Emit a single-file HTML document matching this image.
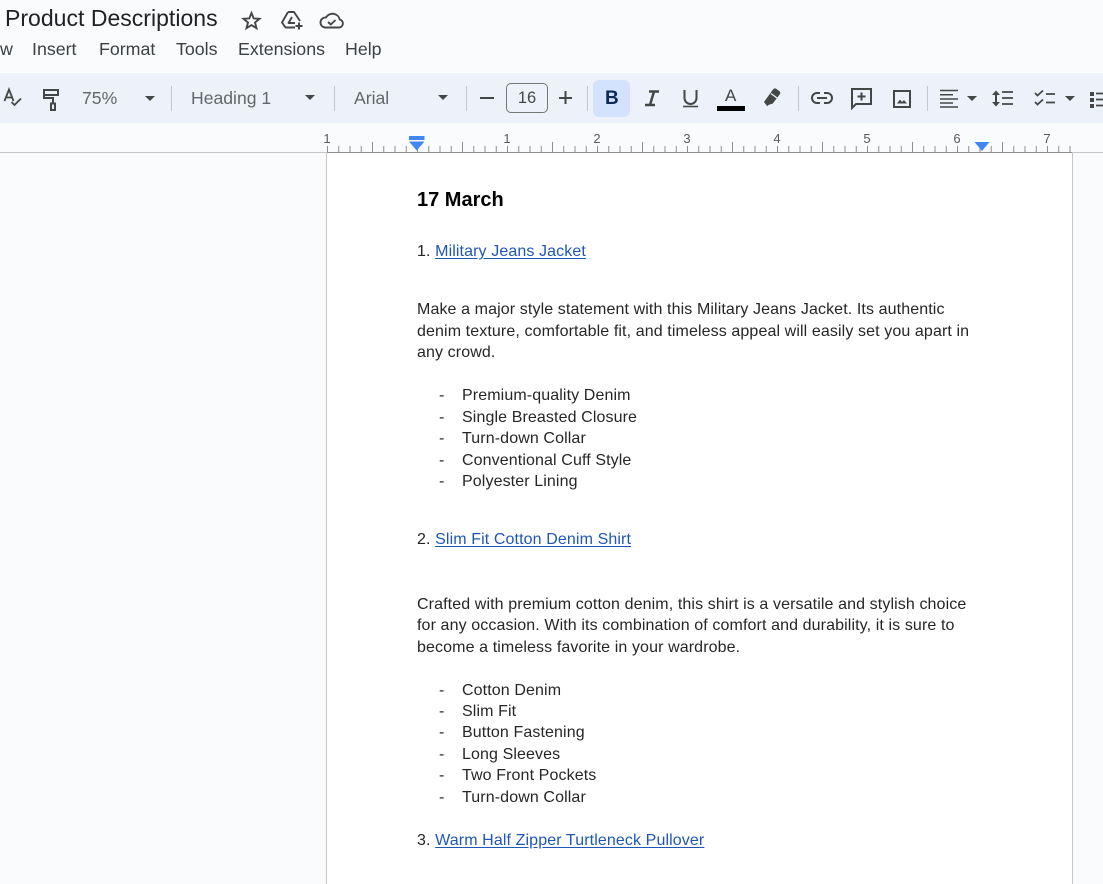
<!DOCTYPE html>
<html><head><meta charset="utf-8"><style>
html,body{margin:0;padding:0;width:1103px;height:884px;overflow:hidden;background:#f9fbfd;font-family:"Liberation Sans",sans-serif}
.a{position:absolute;white-space:nowrap}
.t{position:absolute;white-space:nowrap;font-size:16px;letter-spacing:.11px;line-height:22px;color:#262626;left:417px}
.b{left:462px}
.d{left:439px}
.l{color:#1f57b5;text-decoration:underline;text-underline-offset:2px}
.m{font-size:17.8px;line-height:22px;color:#3c4043;top:38px}
.g{font-size:17.600px;line-height:22px;color:#63666a}
.r{font-size:13px;line-height:14px;color:#5a5a5a;top:132px;width:20px;text-align:center}
.s{position:absolute;width:1px;height:25px;top:86px;background:#c7c7c7}
svg{position:absolute;overflow:visible}
</style></head><body>
<div class="a" style="left:0;top:73px;width:1103px;height:50px;background:#edf2fa"></div>
<div class="a" style="left:327px;top:153px;width:745px;height:731px;background:#fff"></div>
<div class="a" style="left:326px;top:153px;width:1px;height:731px;background:#c7c7c7"></div>
<div class="a" style="left:1072px;top:153px;width:1px;height:731px;background:#c7c7c7"></div>
<div class="a" style="left:0;top:152px;width:1103px;height:1px;background:#c7c7c7"></div>
<div class="a" style="left:327px;top:152px;width:745px;height:1px;background:#8f8f8f"></div>

<div class="a" style="left:5px;top:4px;font-size:23px;line-height:28px;letter-spacing:.02px;color:#202124">Product Descriptions</div>
<svg style="left:240px;top:8px" width="24" height="24" viewBox="0 0 24 24" fill="none" stroke="#444746" stroke-width="1.900" stroke-linejoin="miter"><path d="M11.500 5l2.200 5.400 5.800.4-4.500 3.700 1.500 5.700-5-3.100-5 3.100 1.500-5.700-4.500-3.700 5.800-.4z"/></svg>
<svg style="left:280px;top:8px" width="24" height="24" viewBox="0 0 24 24" fill="none" stroke="#444746" stroke-width="1.900" stroke-linejoin="round"><path d="M8 4h6l6 9M8 4L2 14.500 5.500 19.500H15M12 9l-3.500 6H15"/><path d="M19 14.500v7M15.500 18h7" stroke-width="2"/></svg>
<svg style="left:319px;top:8px" width="26" height="24" viewBox="0 0 26 24" fill="none" stroke="#444746" stroke-width="1.900" stroke-linejoin="round"><path d="M6 19.500h14a4 4 0 0 0 .8-7.900A7.500 7.500 0 0 0 7 9.500a5 5 0 0 0-1 10z"/><path d="M9 14l2.800 2.500 4.700-4.500"/></svg>

<div class="a m" style="left:0">w</div>
<div class="a m" style="left:32px">Insert</div>
<div class="a m" style="left:99px">Format</div>
<div class="a m" style="left:176px">Tools</div>
<div class="a m" style="left:238px">Extensions</div>
<div class="a m" style="left:345px">Help</div>

<svg style="left:0;top:80px" width="70" height="36" fill="none" stroke="#444746" stroke-width="1.800"><path d="M4.500 21L9 9.500 13.500 21M6 17.500h6M11.500 22l3 3 6.500-6.500"/></svg>
<svg style="left:1px;top:80px" width="70" height="36" fill="none" stroke="#444746" stroke-width="2"><path d="M43 10h14v5H43zM43 12.500v5.500h9v5M50 23.500h4v6.500h-4z"/></svg>
<div class="a g" style="left:82px;top:87px">75%</div>
<svg style="left:145px;top:95px" width="12" height="7"><path d="M0 1h10L5 6z" fill="#444746"/></svg>
<div class="s" style="left:171px"></div>
<div class="a g" style="left:191px;top:87px">Heading 1</div>
<svg style="left:305px;top:94px" width="12" height="7"><path d="M0 1h10L5 6z" fill="#444746"/></svg>
<div class="s" style="left:334px"></div>
<div class="a g" style="left:354px;top:87px">Arial</div>
<svg style="left:438px;top:94px" width="12" height="7"><path d="M0 1h10L5 6z" fill="#444746"/></svg>
<div class="s" style="left:466px"></div>
<div class="a" style="left:480px;top:97px;width:14px;height:2px;background:#444746"></div>
<div class="a" style="left:506px;top:83px;width:40px;height:28px;border:1px solid #747775;border-radius:5px;text-align:center;font-size:16.500px;line-height:29px;color:#444746">16</div>
<svg style="left:559px;top:91px" width="14" height="14"><path d="M0 7h13M6.500 0v13" stroke="#444746" stroke-width="2"/></svg>
<div class="s" style="left:587px"></div>
<div class="a" style="left:593px;top:80px;width:37px;height:37px;background:#d3e3fd;border-radius:6px"></div>
<div class="a" style="left:605px;top:87px;font-size:19px;line-height:24px;font-weight:bold;color:#0b2a55">B</div>
<svg style="left:630px;top:78px" width="160" height="40"><path d="M19 13.500h10M15 27h10M24 13.500L20 27" fill="none" stroke="#444746" stroke-width="2.500"/><path d="M54.500 12v8a6 6 0 0 0 12 0v-8" fill="none" stroke="#444746" stroke-width="2"/><path d="M53 28.500h15" stroke="#444746" stroke-width="1.600"/><path d="M134 24l2.500-3.500 6.500-9c1-1.200 2-1.500 3.500-.5l3 2.200c1 .9 1 2 .3 3l-7 9.300-4.500 1.500-1 1.300z" fill="#444746"/><path d="M141 15.500l6 4.500" stroke="#edf2fa" stroke-width="1.200"/></svg>
<div class="a" style="left:725px;top:84px;font-size:17px;line-height:24px;color:#444746">A</div>
<div class="a" style="left:717px;top:106px;width:28px;height:5px;background:#000"></div>
<div class="s" style="left:798px"></div>
<svg style="left:811px;top:91px" width="22" height="14" fill="none" stroke="#444746" stroke-width="2"><path d="M9 2H6a5 5 0 0 0 0 10h3M13 2h3a5 5 0 0 1 0 10h-3M6 7h10"/></svg>
<svg style="left:851px;top:87px" width="22" height="22" fill="none" stroke="#444746" stroke-width="2"><path d="M1 2h19v15H5l-4 4zM10.500 5.500v8M6.500 9.500h8"/></svg>
<svg style="left:893px;top:90px" width="18" height="18"><path d="M1 1h16v16H1z" fill="none" stroke="#444746" stroke-width="2"/><path d="M4 13.500l3-4 2 2.500 2-2 3 3.500z" fill="#444746"/></svg>
<div class="s" style="left:927px"></div>
<svg style="left:935px;top:78px" width="168" height="40"><path d="M5 12.500h18M5 16.800h13M5 21h18M5 25h13M5 29h18" stroke="#444746" stroke-width="1.500" fill="none"/><path d="M32 18h10l-5 5zM130 18h10l-5 5z" fill="#444746"/><path d="M61 12.500l-4 4.500h8zM61 28.500l-4-4.500h8z" fill="#444746"/><path d="M61 16v9" stroke="#444746" stroke-width="2"/><path d="M67 14h11M67 20h11M67 26h11" stroke="#444746" stroke-width="1.700"/><path d="M100 15l2.500 2.500L108 12.500M100 24l2.500 2.500 5.500-5M111 16h9M111 24.500h9" fill="none" stroke="#444746" stroke-width="1.800"/><path d="M155 14h4v4h-4zM155 20h4v4h-4zM155 26h4v4h-4z" fill="#444746"/><path d="M161 15.500h7M161 21.500h7M161 27.500h7" stroke="#444746" stroke-width="1.700"/></svg>

<svg style="left:0;top:140px" width="1103" height="13">
<defs><pattern id="p" x="327" y="0" width="90" height="13" patternUnits="userSpaceOnUse">
<path d="M.5 6v6M11.750 6v6M23 6v6M34.250 6v6M45.500 2v10M56.750 6v6M68 6v6M79.250 6v6" stroke="#8f8f8f" stroke-width="1" fill="none"/>
</pattern></defs>
<rect x="327" y="0" width="745" height="13" fill="url(#p)"/></svg>
<div class="a r" style="left:317px">1</div>
<div class="a r" style="left:497px">1</div>
<div class="a r" style="left:587px">2</div>
<div class="a r" style="left:677px">3</div>
<div class="a r" style="left:767px">4</div>
<div class="a r" style="left:857px">5</div>
<div class="a r" style="left:947px">6</div>
<div class="a r" style="left:1037px">7</div>
<svg style="left:409px;top:136px" width="16" height="15"><path d="M0 0h15.500v4H0z" fill="#4285f4"/><path d="M0 5.500h15.500L7.700 14.500z" fill="#4285f4"/></svg>
<svg style="left:974px;top:141px" width="16" height="10"><path d="M0.500 1h15L8 10z" fill="#4285f4"/></svg>

<div class="t" style="top:189px;font-size:20px;letter-spacing:0;font-weight:bold;color:#000">17 March</div>
<div class="t" style="top:241px">1. <span class="l">Military Jeans Jacket</span></div>
<div class="t" style="top:299px">Make a major style statement with this Military Jeans Jacket. Its authentic</div>
<div class="t" style="top:321px">denim texture, comfortable fit, and timeless appeal will easily set you apart in</div>
<div class="t" style="top:342px">any crowd.</div>
<div class="t d" style="top:385px">-</div><div class="t b" style="top:385px">Premium-quality Denim</div>
<div class="t d" style="top:407px">-</div><div class="t b" style="top:407px">Single Breasted Closure</div>
<div class="t d" style="top:428px">-</div><div class="t b" style="top:428px">Turn-down Collar</div>
<div class="t d" style="top:450px">-</div><div class="t b" style="top:450px">Conventional Cuff Style</div>
<div class="t d" style="top:471px">-</div><div class="t b" style="top:471px">Polyester Lining</div>
<div class="t" style="top:529px">2. <span class="l">Slim Fit Cotton Denim Shirt</span></div>
<div class="t" style="top:594px">Crafted with premium cotton denim, this shirt is a versatile and stylish choice</div>
<div class="t" style="top:615px">for any occasion. With its combination of comfort and durability, it is sure to</div>
<div class="t" style="top:637px">become a timeless favorite in your wardrobe.</div>
<div class="t d" style="top:680px">-</div><div class="t b" style="top:680px">Cotton Denim</div>
<div class="t d" style="top:701px">-</div><div class="t b" style="top:701px">Slim Fit</div>
<div class="t d" style="top:722px">-</div><div class="t b" style="top:722px">Button Fastening</div>
<div class="t d" style="top:744px">-</div><div class="t b" style="top:744px">Long Sleeves</div>
<div class="t d" style="top:765px">-</div><div class="t b" style="top:765px">Two Front Pockets</div>
<div class="t d" style="top:787px">-</div><div class="t b" style="top:787px">Turn-down Collar</div>
<div class="t" style="top:830px">3. <span class="l">Warm Half Zipper Turtleneck Pullover</span></div>
</body></html>
